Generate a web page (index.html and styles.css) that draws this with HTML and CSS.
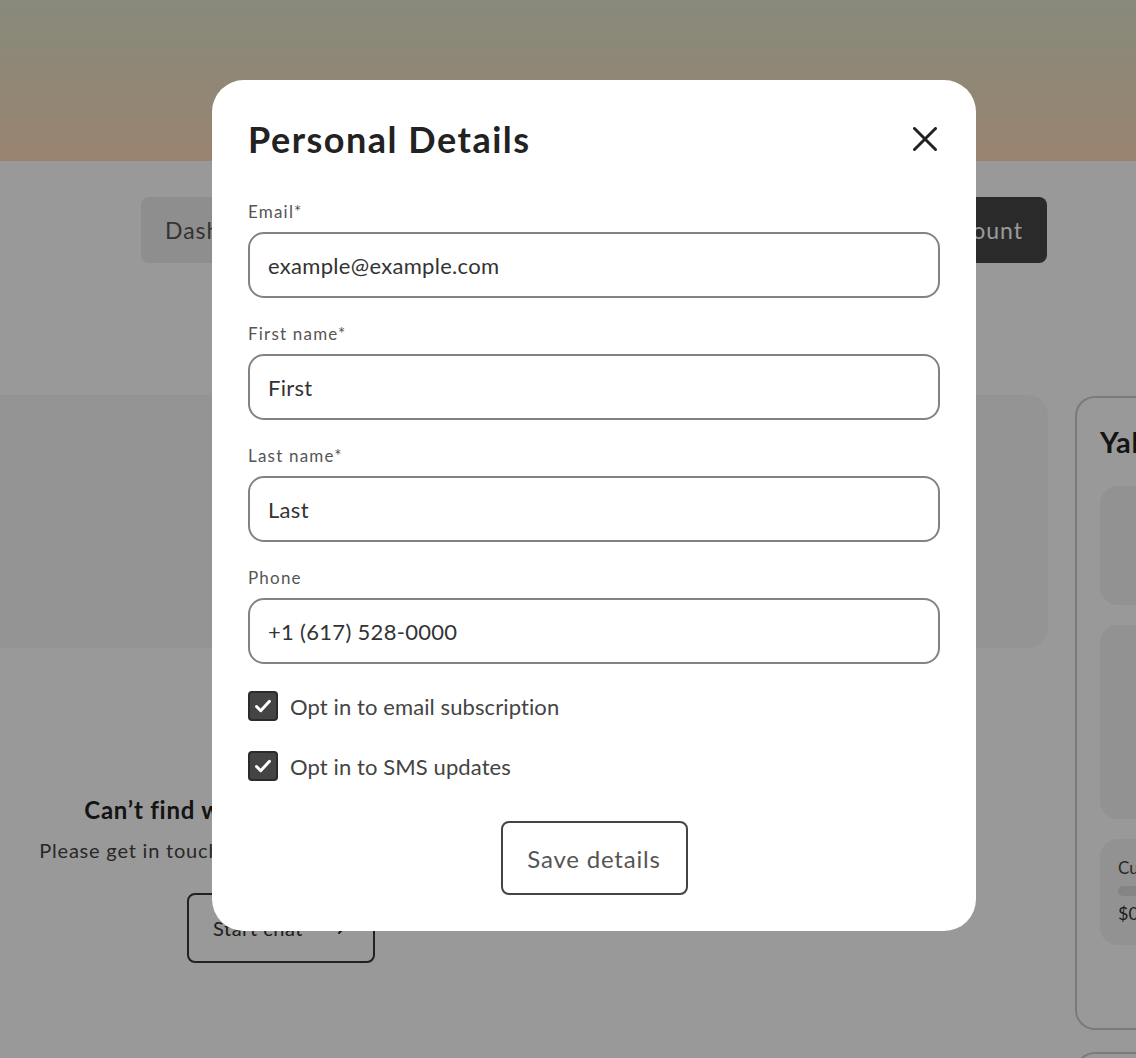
FILE: index.html
```html
<!DOCTYPE html>
<html lang="en">
<head>
<meta charset="utf-8">
<title>Personal Details</title>
<link rel="stylesheet" href="styles.css">
</head>
<body>
<div class="page">
  <header class="banner"></header>

  <nav class="nav">
    <a class="nav-btn nav-btn--light">Dashboard</a>
    <a class="nav-btn nav-btn--light">Orders</a>
    <a class="nav-btn nav-btn--dark">My account</a>
  </nav>

  <div class="content">
    <div class="main-col">
      <section class="hero-card"></section>
      <div class="help-grid">
        <div class="help">
          <h3 class="help-title">Can’t find what you’re looking for?</h3>
          <p class="help-text">Please get in touch with our friendly support team.</p>
          <a class="chat-btn">Start chat
            <svg class="chev" width="16" height="16" viewBox="0 0 16 16"><path d="M6 3l5 5-5 5" fill="none" stroke="#333" stroke-width="2" stroke-linecap="round" stroke-linejoin="round"/></svg>
          </a>
        </div>
        <div class="help"></div>
      </div>
    </div>
    <aside class="side-col">
      <div class="side-card">
        <h2 class="side-title">Yalla rewards</h2>
        <div class="side-box side-box--a"></div>
        <div class="side-box side-box--b"></div>
        <div class="side-box side-box--c">
          <div class="side-small">Current balance</div>
          <div class="side-bar"></div>
          <div class="side-amt">$0.00</div>
        </div>
      </div>
      <div class="side-card side-card--next"></div>
    </aside>
  </div>
</div>

<div class="overlay"></div>

<div class="modal" role="dialog" aria-labelledby="pd-title">
  <div class="modal-head">
    <h1 class="modal-title" id="pd-title">Personal Details</h1>
    <button class="close-btn" aria-label="Close">
      <svg width="24" height="24" viewBox="0 0 24 24"><path d="M1.5 1.5L22.5 22.5M22.5 1.5L1.5 22.5" stroke="#222" stroke-width="3" stroke-linecap="round"/></svg>
    </button>
  </div>
  <form class="form">
    <div class="field">
      <label class="label">Email*</label>
      <div class="input">example@example.com</div>
    </div>
    <div class="field">
      <label class="label">First name*</label>
      <div class="input">First</div>
    </div>
    <div class="field">
      <label class="label">Last name*</label>
      <div class="input">Last</div>
    </div>
    <div class="field">
      <label class="label">Phone</label>
      <div class="input">+1 (617) 528-0000</div>
    </div>
    <div class="checks">
      <label class="check">
        <span class="box"><svg width="22" height="22" viewBox="0 0 22 22"><path d="M4.5 11.5l4.2 4.2 8.8-9.4" fill="none" stroke="#fff" stroke-width="3" stroke-linecap="round" stroke-linejoin="round"/></svg></span>
        <span class="check-text">Opt in to email subscription</span>
      </label>
      <label class="check">
        <span class="box"><svg width="22" height="22" viewBox="0 0 22 22"><path d="M4.5 11.5l4.2 4.2 8.8-9.4" fill="none" stroke="#fff" stroke-width="3" stroke-linecap="round" stroke-linejoin="round"/></svg></span>
        <span class="check-text">Opt in to SMS updates</span>
      </label>
    </div>
    <div class="actions">
      <button type="button" class="save-btn">Save details</button>
    </div>
  </form>
</div>
</body>
</html>
```

FILE: styles.css
```css
* { box-sizing: border-box; }
html, body {
  margin: 0;
  padding: 0;
  height: 100%;
  overflow: hidden;
}
body {
  background: #fff;
  font-family: "Lato", "Liberation Sans", sans-serif;
  color: #333;
}

.page {
  width: 1240px;
}

.banner {
  height: 161px;
  background: linear-gradient(180deg, #e2e6cf 0%, #f0e1c4 50%, #ffdcbb 100%);
}

.nav {
  display: flex;
  justify-content: space-between;
  margin: 36px 0 0 141px;
  width: 906px;
  height: 66px;
}
.nav-btn {
  display: flex;
  align-items: center;
  padding: 0 24px;
  border-radius: 8px;
  font-size: 23px;
  letter-spacing: 1px;
}
.nav-btn--light { background: #ededed; color: #555; }
.nav-btn--dark { background: #464646; color: #fff; }

.content {
  display: flex;
  gap: 27px;
  margin-top: 132px;
}
.main-col { flex: none; width: 1048px; }
.hero-card {
  height: 253px;
  background: #f7f7f7;
  border-radius: 0 20px 20px 0;
}
.help-grid {
  display: grid;
  grid-template-columns: 562px 1fr;
}
.help {
  display: flex;
  flex-direction: column;
  align-items: center;
  padding-top: 147px;
}
.help-title {
  margin: 0;
  font-size: 24px;
  font-weight: 700;
  letter-spacing: 0.78px;
  color: #222;
  line-height: 30px;
}
.help-text {
  margin: 12px 0 0;
  font-size: 20px;
  letter-spacing: 0.8px;
  color: #444;
  line-height: 26px;
  white-space: nowrap;
}
.chat-btn {
  margin-top: 30px;
  width: 188px;
  height: 70px;
  border: 2px solid #383838;
  border-radius: 8px;
  display: flex;
  align-items: center;
  justify-content: center;
  gap: 30px;
  font-size: 20px;
  letter-spacing: 0.5px;
  color: #333;
}

.side-col { flex: none; width: 140px; }
.side-card {
  height: 634px;
  margin-top: 1px;
  border: 2px solid #cbcbcb;
  border-right: none;
  border-radius: 20px 0 0 20px;
  padding: 26px 0 0 23px;
}
.side-card--next { height: 40px; margin-top: 22px; }
.side-title {
  margin: 0 0 26px;
  font-size: 29px;
  font-weight: 700;
  letter-spacing: 0.6px;
  color: #222;
  white-space: nowrap;
  line-height: 36px;
}
.side-box {
  background: #f3f3f3;
  border-radius: 18px 0 0 18px;
  margin-bottom: 20px;
}
.side-box--a { height: 119px; }
.side-box--b { height: 194px; }
.side-box--c { height: 106px; padding: 18px 0 0 18px; }
.side-small { font-size: 17px; color: #444; white-space: nowrap; }
.side-bar { height: 10px; margin: 8px 0 6px; background: #dcdcdc; border-radius: 5px 0 0 5px; }
.side-amt { font-size: 18px; color: #333; }

.overlay {
  position: fixed;
  inset: 0;
  background: rgba(0, 0, 0, 0.4);
}

.modal {
  position: fixed;
  left: 212px;
  top: 80px;
  width: 764px;
  background: #fff;
  border-radius: 32px;
  padding: 36px;
}
.modal-head {
  display: flex;
  justify-content: space-between;
  align-items: center;
  margin-bottom: 40px;
}
.modal-title {
  margin: 0;
  font-size: 36px;
  font-weight: 700;
  letter-spacing: 1.5px;
  color: #222;
  line-height: 46px;
}
.close-btn {
  border: 0;
  background: none;
  padding: 0;
  margin-right: 3px;
  width: 24px;
  height: 24px;
  display: flex;
}

.form { display: flex; flex-direction: column; }
.field { margin-bottom: 26px; }
.label {
  display: block;
  font-size: 17px;
  letter-spacing: 1.2px;
  line-height: 20px;
  color: #555;
  margin-bottom: 10px;
}
.input {
  height: 66px;
  border: 2px solid #808488;
  border-radius: 16px;
  padding: 0 18px;
  display: flex;
  align-items: center;
  font-size: 22px;
  letter-spacing: 0.3px;
  color: #333;
}

.checks { display: flex; flex-direction: column; gap: 30px; margin-top: 1px; }
.check { display: flex; align-items: center; gap: 12px; }
.box {
  width: 30px;
  height: 30px;
  border-radius: 4px;
  background: #444;
  border: 2px solid #2b2b2b;
  display: flex;
  align-items: center;
  justify-content: center;
}
.check-text { font-size: 22px; letter-spacing: 0.1px; color: #444; }

.actions {
  display: flex;
  justify-content: center;
  margin-top: 40px;
}
.save-btn {
  width: 187px;
  height: 74px;
  border: 2px solid #444;
  border-radius: 8px;
  background: #fff;
  font-family: inherit;
  font-size: 24px;
  letter-spacing: 0.8px;
  color: #555;
}
```
